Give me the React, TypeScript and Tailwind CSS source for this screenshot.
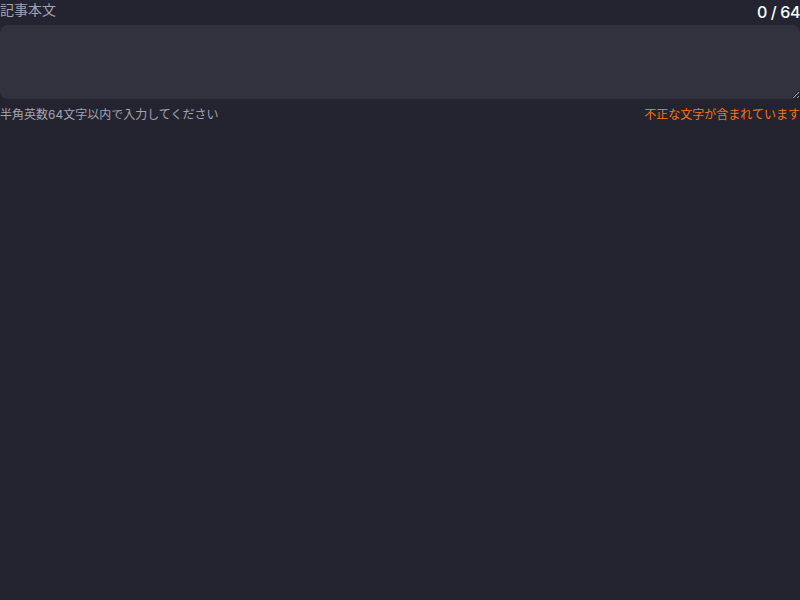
import React, { useState } from 'react';

const MAX = 64;

const App: React.FC = () => {
  const [text, setText] = useState('');

  return (
    <div
      className="min-h-screen w-full bg-[#242430]"
      style={{ fontFamily: '"Inter", "Noto Sans CJK JP", sans-serif' }}
    >
      <div className="flex flex-col">
        <div className="flex items-start justify-between h-[25px]">
          <label className="text-sm leading-5 text-[#a3a3b3]">記事本文</label>
          <span className="text-base leading-6 font-medium tracking-tight text-white">
            {text.length} / {MAX}
          </span>
        </div>
        <textarea
          value={text}
          onChange={(e) => setText(e.target.value)}
          className="h-[74px] w-full rounded-lg bg-[#32323f] px-3 py-2 text-sm text-white outline-none"
        />
        <div className="mt-2 flex items-center justify-between text-xs leading-4">
          <span className="text-[#a3a3b3]">半角英数64文字以内で入力してください</span>
          <span className="text-[#f97316]">不正な文字が含まれています</span>
        </div>
      </div>
    </div>
  );
};

export default App;
